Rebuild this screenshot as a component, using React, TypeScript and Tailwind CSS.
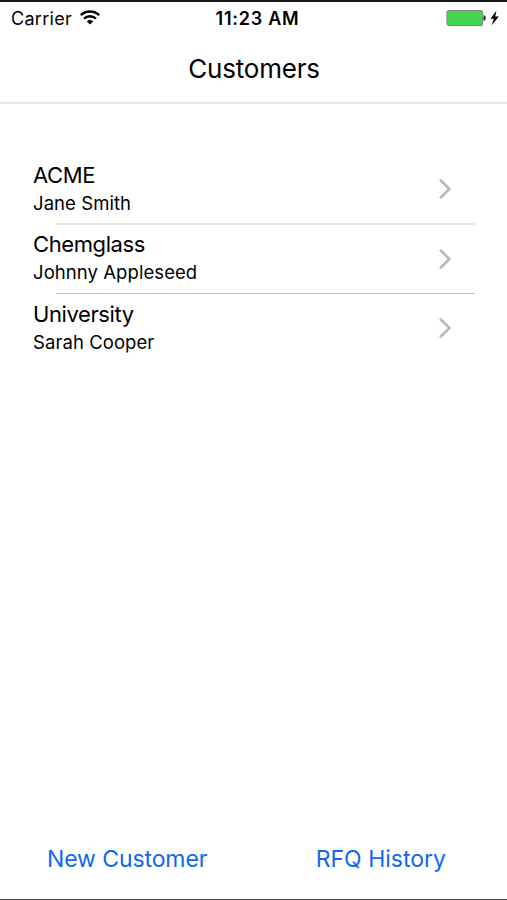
const customers = [
  { company: 'ACME', contact: 'Jane Smith', line: '-mt-px h-0.5 bg-[#e9e9e9]' },
  { company: 'Chemglass', contact: 'Johnny Appleseed', line: 'h-px bg-[#c2c2c4]' },
  { company: 'University', contact: 'Sarah Cooper', line: '' },
];

function WifiIcon() {
  return (
    <svg width="20" height="15" viewBox="0 0 20 15" fill="none" stroke="black" strokeWidth="2.4" className="mb-0.5">
      <path d="M.8 5.2C6 .3 14 .3 19.2 5.2M4 8.6c3.4-3.2 8.6-3.2 12 0" />
      <path d="M6.8 11.4q3.2-2.7 6.4 0L10 14.6z" fill="black" stroke="none" />
    </svg>
  );
}

function BatteryIcon() {
  return (
    <svg width="54" height="18" viewBox="0 0 54 18" className="mb-0.5">
      <rect x="1" y="1.5" width="35.6" height="15" rx="2" fill="#43d551" stroke="#858c86" strokeWidth="1.2" />
      <path d="M37.5 6.2q2.2 0 2.2 2.8t-2.2 2.8z" fill="#222" />
      <path d="M50.5 1.5L44.5 9.8h3.3l-2.2 6.7 7.2-9h-3.6z" />
    </svg>
  );
}

export default function App() {
  return (
    <main className="flex h-[900px] w-[507px] flex-col border-t-2 border-b border-t-[#171717] border-b-[#444] bg-white font-['Inter',sans-serif] text-black">
      <header className="border-b-2 border-[#e6e6e6]">
        <div className="flex h-[33px] items-center justify-between pr-[7px] pl-[11px]">
          <div className="flex flex-1 items-center gap-2">
            <span className="text-[18px] tracking-[0.3px]">Carrier</span>
            <WifiIcon />
          </div>
          <time className="pl-1 text-[18px] font-semibold tracking-[0.75px]">11:23 AM</time>
          <div className="flex flex-1 justify-end">
            <BatteryIcon />
          </div>
        </div>
        <h1 className="flex h-[67px] items-center justify-center pl-px text-[26px] tracking-[-0.2px]">Customers</h1>
      </header>
      <ul className="mx-8 mt-[51px]">
        {customers.map((c) => (
          <li key={c.company} className="flex h-[69.5px] flex-col">
            <button className="flex h-[68.5px] w-full shrink-0 items-center justify-between pr-[23px] pl-px text-left">
              <span className="flex flex-col">
                <span className="text-[22px] leading-7 tracking-[-0.4px]">{c.company}</span>
                <span className="text-[18.5px] leading-[29px] tracking-[0.07px]">{c.contact}</span>
              </span>
              <svg width="14" height="22" viewBox="0 0 14 22" fill="none" stroke="#b9b9bb" strokeWidth="2.6">
                <path d="M2 1.8L11.4 11 2 20.2" />
              </svg>
            </button>
            <span className={`ml-6 shrink-0 ${c.line}`} />
          </li>
        ))}
      </ul>
      <footer className="mt-auto flex h-[79px] items-center justify-between pr-[61px] pl-[47px] text-[23px] text-[#0f68ee]">
        <button className="tracking-[-0.1px]">New Customer</button>
        <button>RFQ History</button>
      </footer>
    </main>
  );
}
